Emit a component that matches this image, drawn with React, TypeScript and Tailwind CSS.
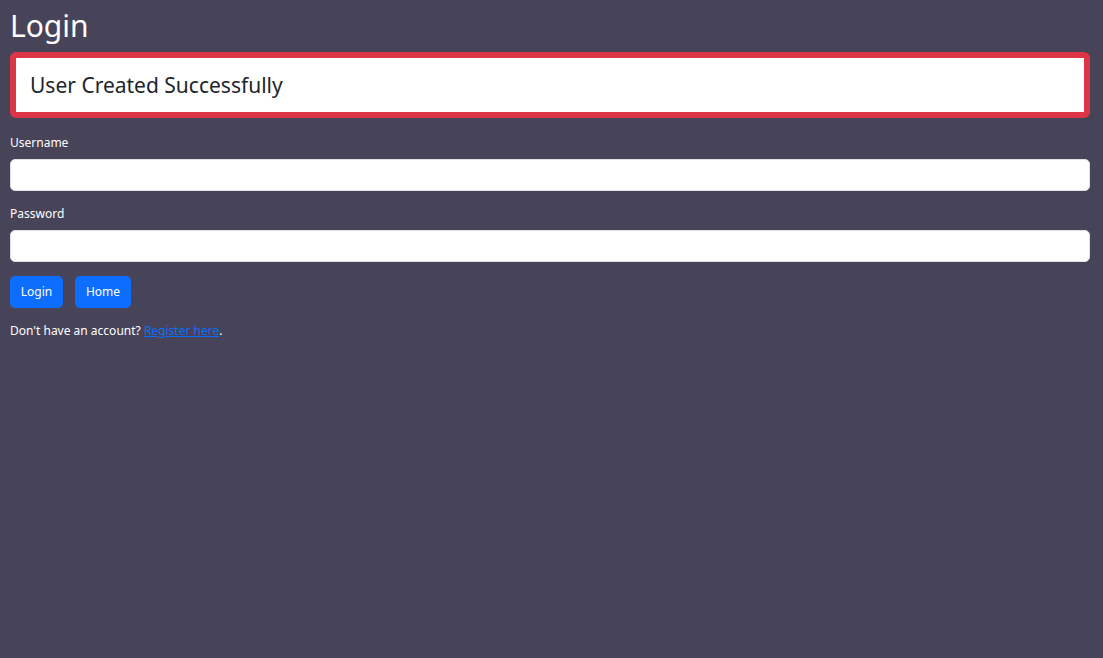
export default function App() {
  return (
    <div
      className="min-h-[658px] w-full bg-[#474359] pl-[10px] pr-[13px] pt-[4px] text-white"
      style={{ fontFamily: '"Noto Sans", "Open Sans", sans-serif' }}
    >
      <h1 className="text-[30px] leading-[44px] font-normal">Login</h1>

      <div className="mt-[4px] rounded-[6px] border-[6px] border-[#dc3545] bg-white px-[14px] py-[12px]">
        <p className="text-[21px] leading-[30px] text-[#212529]">User Created Successfully</p>
      </div>

      <form className="mt-[16px] flex flex-col" onSubmit={(e) => e.preventDefault()}>
        <label className="text-[12px] leading-[18px]">Username</label>
        <input
          type="text"
          className="mt-[7px] h-[32px] w-full rounded-[5px] border border-[#dee2e6] bg-white px-3 text-sm text-black outline-none"
        />
        <label className="mt-[14px] text-[12px] leading-[18px]">Password</label>
        <input
          type="password"
          className="mt-[7px] h-[32px] w-full rounded-[5px] border border-[#dee2e6] bg-white px-3 text-sm text-black outline-none"
        />
        <div className="mt-[14px] flex gap-[12px]">
          <button className="h-[32px] w-[53px] rounded-[5px] bg-[#0d6efd] text-[12px] text-white">Login</button>
          <button className="h-[32px] w-[56px] rounded-[5px] bg-[#0d6efd] text-[12px] text-white">Home</button>
        </div>
      </form>

      <p className="mt-[14px] text-[12px] leading-[18px]">
        Don't have an account?{' '}
        <a href="#" className="text-[#0d6efd] underline">
          Register here
        </a>
        .
      </p>
    </div>
  )
}
